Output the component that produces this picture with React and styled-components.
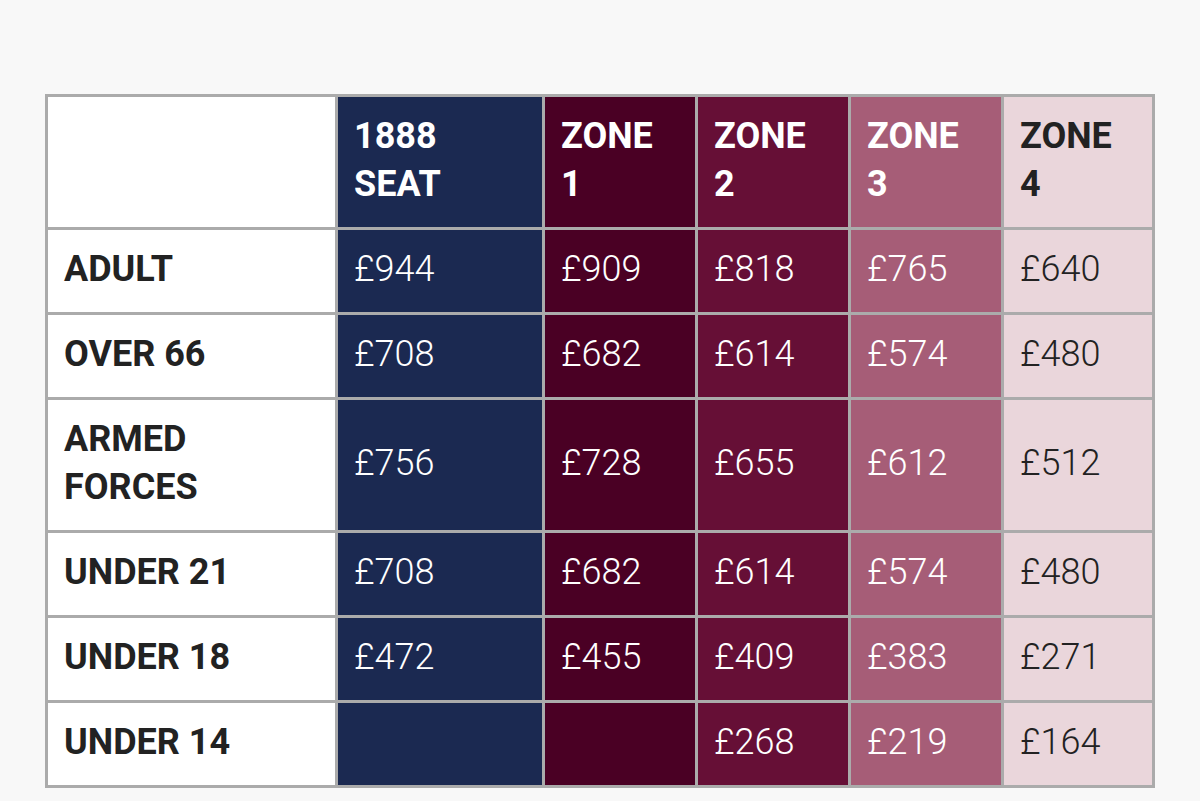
import React from "react";
import styled, { createGlobalStyle } from "styled-components";

const GlobalStyle = createGlobalStyle`
  html, body {
    margin: 0;
    padding: 0;
    background: #f8f8f8;
    font-family: Roboto, "Liberation Sans", Arial, sans-serif;
  }
`;

const zones = {
  blank: { bg: "#ffffff", fg: "#222222" },
  seat: { bg: "#1b2951", fg: "#ffffff" },
  z1: { bg: "#4a0024", fg: "#ffffff" },
  z2: { bg: "#660f36", fg: "#ffffff" },
  z3: { bg: "#a65d77", fg: "#ffffff" },
  z4: { bg: "#ead6db", fg: "#222222" },
};

const columns = [
  { key: "seat", label: ["1888", "SEAT"], width: 207 },
  { key: "z1", label: ["ZONE", "1"], width: 153 },
  { key: "z2", label: ["ZONE", "2"], width: 153 },
  { key: "z3", label: ["ZONE", "3"], width: 153 },
  { key: "z4", label: ["ZONE", "4"], width: 151 },
];

const rows = [
  { label: ["ADULT"], prices: ["£944", "£909", "£818", "£765", "£640"] },
  { label: ["OVER 66"], prices: ["£708", "£682", "£614", "£574", "£480"] },
  { label: ["ARMED", "FORCES"], prices: ["£756", "£728", "£655", "£612", "£512"] },
  { label: ["UNDER 21"], prices: ["£708", "£682", "£614", "£574", "£480"] },
  { label: ["UNDER 18"], prices: ["£472", "£455", "£409", "£383", "£271"] },
  { label: ["UNDER 14"], prices: ["", "", "£268", "£219", "£164"] },
];

const Page = styled.div`
  padding: 94px 45px 0 45px;
`;

const Table = styled.table`
  border-collapse: collapse;
  table-layout: fixed;
  width: 1110px;
  border: 3px solid #ababab;
`;

const Cell = styled.td`
  border: 3px solid #ababab;
  padding: 15px 16px 19px;
  background: ${(p) => zones[p.$zone].bg};
  color: ${(p) => zones[p.$zone].fg};
  font-size: 36px;
  line-height: 48px;
  font-weight: ${(p) => (p.$bold ? 700 : 300)};
  text-align: left;
  vertical-align: middle;
  white-space: nowrap;
  overflow: hidden;
`;

const HeadCell = styled(Cell).attrs({ as: "th" })``;

const Lines = ({ parts }) =>
  parts.map((t, i) => (
    <React.Fragment key={i}>
      {i > 0 && <br />}
      {t}
    </React.Fragment>
  ));

export default function App() {
  return (
    <>
      <GlobalStyle />
      <Page>
        <Table>
          <colgroup>
            <col style={{ width: 290 }} />
            {columns.map((c) => (
              <col key={c.key} style={{ width: c.width }} />
            ))}
          </colgroup>
          <thead>
            <tr>
              <HeadCell $zone="blank" $bold />
              {columns.map((c) => (
                <HeadCell key={c.key} $zone={c.key} $bold>
                  <Lines parts={c.label} />
                </HeadCell>
              ))}
            </tr>
          </thead>
          <tbody>
            {rows.map((r) => (
              <tr key={r.label.join(" ")}>
                <Cell $zone="blank" $bold>
                  <Lines parts={r.label} />
                </Cell>
                {r.prices.map((p, i) => (
                  <Cell key={i} $zone={columns[i].key}>
                    {p}
                  </Cell>
                ))}
              </tr>
            ))}
          </tbody>
        </Table>
      </Page>
    </>
  );
}
